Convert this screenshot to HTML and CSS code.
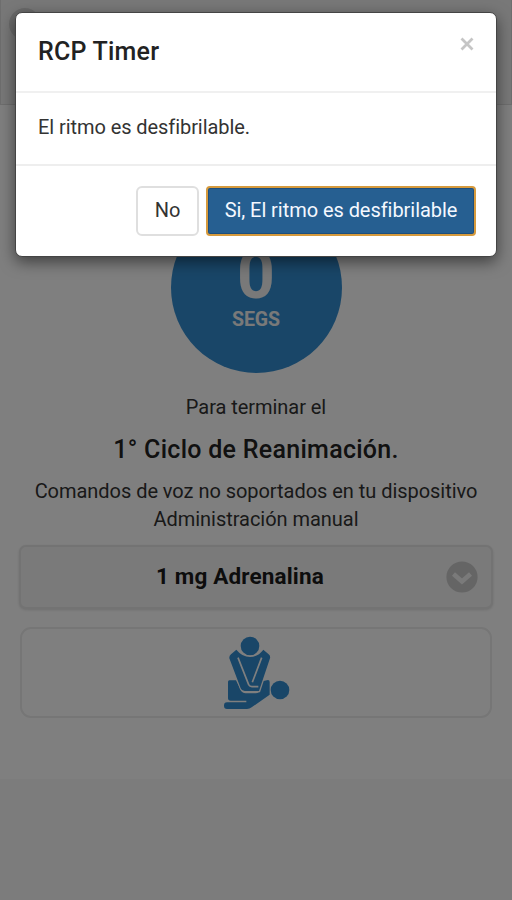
FILE: index.html
```html
<!DOCTYPE html>
<html lang="es">
<head>
<meta charset="utf-8">
<title>RCP Timer</title>
<link rel="stylesheet" href="styles.css">
</head>
<body>
<div class="page">
  <header class="topbar"><span class="back"></span></header>
  <main class="content">
    <div class="timer"><span class="count">0</span><span class="unit">SEGS</span></div>
    <p class="lead"><span class="t-lead">Para terminar el</span></p>
    <h2 class="cycle"><span class="t-cycle">1° Ciclo de Reanimación.</span></h2>
    <p class="note"><span class="t-voice">Comandos de voz no soportados en tu dispositivo</span></p>
    <p class="note"><span class="t-manual">Administración manual</span></p>
    <button class="drug"><span class="t-drug">1 mg Adrenalina</span>
      <svg class="chevron" viewBox="0 0 32 32"><circle cx="16" cy="16" r="15.6"/><path d="M7.500 13 16 20.500l8.500-7.500"/></svg>
    </button>
    <div class="cpr">
      <svg class="cpr-icon" viewBox="50 30 204 226">
        <circle cx="131" cy="63" r="28"/>
        <circle cx="221" cy="195" r="28"/>
        <path d="M69 166h20l15 30q4 9 14 9h30q12 0 14-12l6-24 17-4q5 0 5 6v38l-54 38q-6 5-14 5H62q-9 0-9-10t9-10h58v-5H73q-8 0-8-7v-49q0-5 4-5z"/>
        <path class="gap" d="M66 101q-1-9 7-14l18-17q18 22 40 22t39-22l19 16q7 6 5 15l-33 101h-46q-10 0-14-9z"/>
        <path d="M69 100q-1-7 5-12l16-14q18 22 41 22t40-22l16 14q6 5 4 12l-33 98h-43q-9 0-12-8z"/>
        <path class="gap-line" d="m95 98 32 81q3 6 10 6h19M166 98l-28 74"/>
      </svg>
    </div>
  </main>
</div>
<div class="backdrop">
  <section class="modal" role="dialog">
    <header class="modal-header">
      <h1 class="title"><span class="t-title">RCP Timer</span></h1>
      <svg class="close" viewBox="0 0 14 14"><path d="m1.500 1.500 11 11m0-11-11 11"/></svg>
    </header>
    <div class="modal-body"><span class="t-body">El ritmo es desfibrilable.</span></div>
    <footer class="modal-footer">
      <button class="btn"><span class="t-no">No</span></button>
      <button class="btn primary"><span class="t-yes">Si, El ritmo es desfibrilable</span></button>
    </footer>
  </section>
</div>
</body>
</html>
```
FILE: styles.css
```css
* { box-sizing: border-box; }
body { margin: 0; background: #f9f9f9; font-family: Roboto, sans-serif; color: #333; font-size: 20px; overflow: hidden; }
h1, h2, p { margin: 0; font-weight: 400; }
button { font: inherit; color: inherit; margin: 0; }
span { white-space: nowrap; }
.page { height: 900px; }
.topbar { height: 105px; padding: 8px; background: #f1f1f1; border: 1px solid #dcdcdc; border-top: 0; }
.back { display: block; width: 32px; height: 32px; border-radius: 50%; background: #d4d4d4; }
.content { height: 674px; padding: 97px 20px 0; background: #fff; display: flex; flex-direction: column; align-items: center; text-align: center; }
.timer { width: 171px; height: 171px; border-radius: 50%; background: #338dd0; color: #f3f3f3; display: flex; flex-direction: column; align-items: center; flex: none; font-weight: 700; padding-top: 39px; }
.count { font-size: 66px; line-height: 70px; }
.unit { font-size: 19.500px; line-height: 20px; margin-top: -1px; font-weight: 700; letter-spacing: -.1px; }
.lead { line-height: 28px; margin-top: 20px; letter-spacing: -.05px; }
.cycle { font-size: 25px; line-height: 32px; font-weight: 500; margin-top: 13px; color: #222; letter-spacing: .28px; }
.note { line-height: 28px; letter-spacing: -.04px; }
.cycle + .note { margin-top: 11px; }
.drug { width: 474px; height: 64px; flex: none; margin-top: 12px; border: 2px solid #e6e6e6; border-radius: 7px; background: #f5f5f5; box-shadow: 0 1px 3px #0002; display: grid; grid-template-columns: 1fr 32px; align-items: center; padding: 0 13px; font-size: 22.500px; font-weight: 700; color: #1a1a1a; }
.t-drug { letter-spacing: .15px; margin-top: -3px; }
.chevron { width: 32px; height: 32px; }
.chevron circle { fill: #cacaca; }
.chevron path { fill: none; stroke: #f5f5f5; stroke-width: 4.500; }
.cpr { width: 472px; height: 91px; flex: none; margin-top: 18px; border: 2px solid #ececec; border-radius: 11px; display: flex; justify-content: center; padding: 6px 0 0 1px; }
.cpr-icon { width: 68px; height: 75.330px; }
.cpr-icon { fill: #338dd0; }
.cpr-icon .gap { fill: #fff; }
.cpr-icon .gap-line { fill: none; stroke: #fff; stroke-width: 5; }
.backdrop { position: absolute; inset: 0; background: rgba(0,0,0,.5); padding: 12px 15px; }
.modal { height: 245px; background: #fff; border: 1px solid #444; border-radius: 7px; box-shadow: 0 5px 15px rgba(0,0,0,.5); display: flex; flex-direction: column; }
.modal-header { height: 80px; border-bottom: 2px solid #f0f0f0; display: flex; justify-content: space-between; padding: 22px 22px 0; }
.title { font-size: 25px; line-height: 34px; font-weight: 500; color: #222; letter-spacing: .22px; }
.close { width: 14px; height: 14px; margin-top: 2px; fill: none; stroke: #c5c5c5; stroke-width: 2.800; }
.modal-body { height: 73px; border-bottom: 2px solid #eee; padding: 20px 22px; line-height: 28px; letter-spacing: -.07px; }
.modal-footer { display: flex; justify-content: flex-end; gap: 7px; padding: 20px 20px 0; }
.btn { width: 63px; height: 50px; padding: 0 0 2px; background: #fff; border: 2px solid #dfdfdf; border-radius: 6px; display: flex; justify-content: center; align-items: center; letter-spacing: -.05px; }
.primary { width: 270px; background: #265f91; border-color: #d69a3d; border-radius: 4px; color: #f4f8ff; box-shadow: inset 0 0 0 1px #1e4f7c; }
```
